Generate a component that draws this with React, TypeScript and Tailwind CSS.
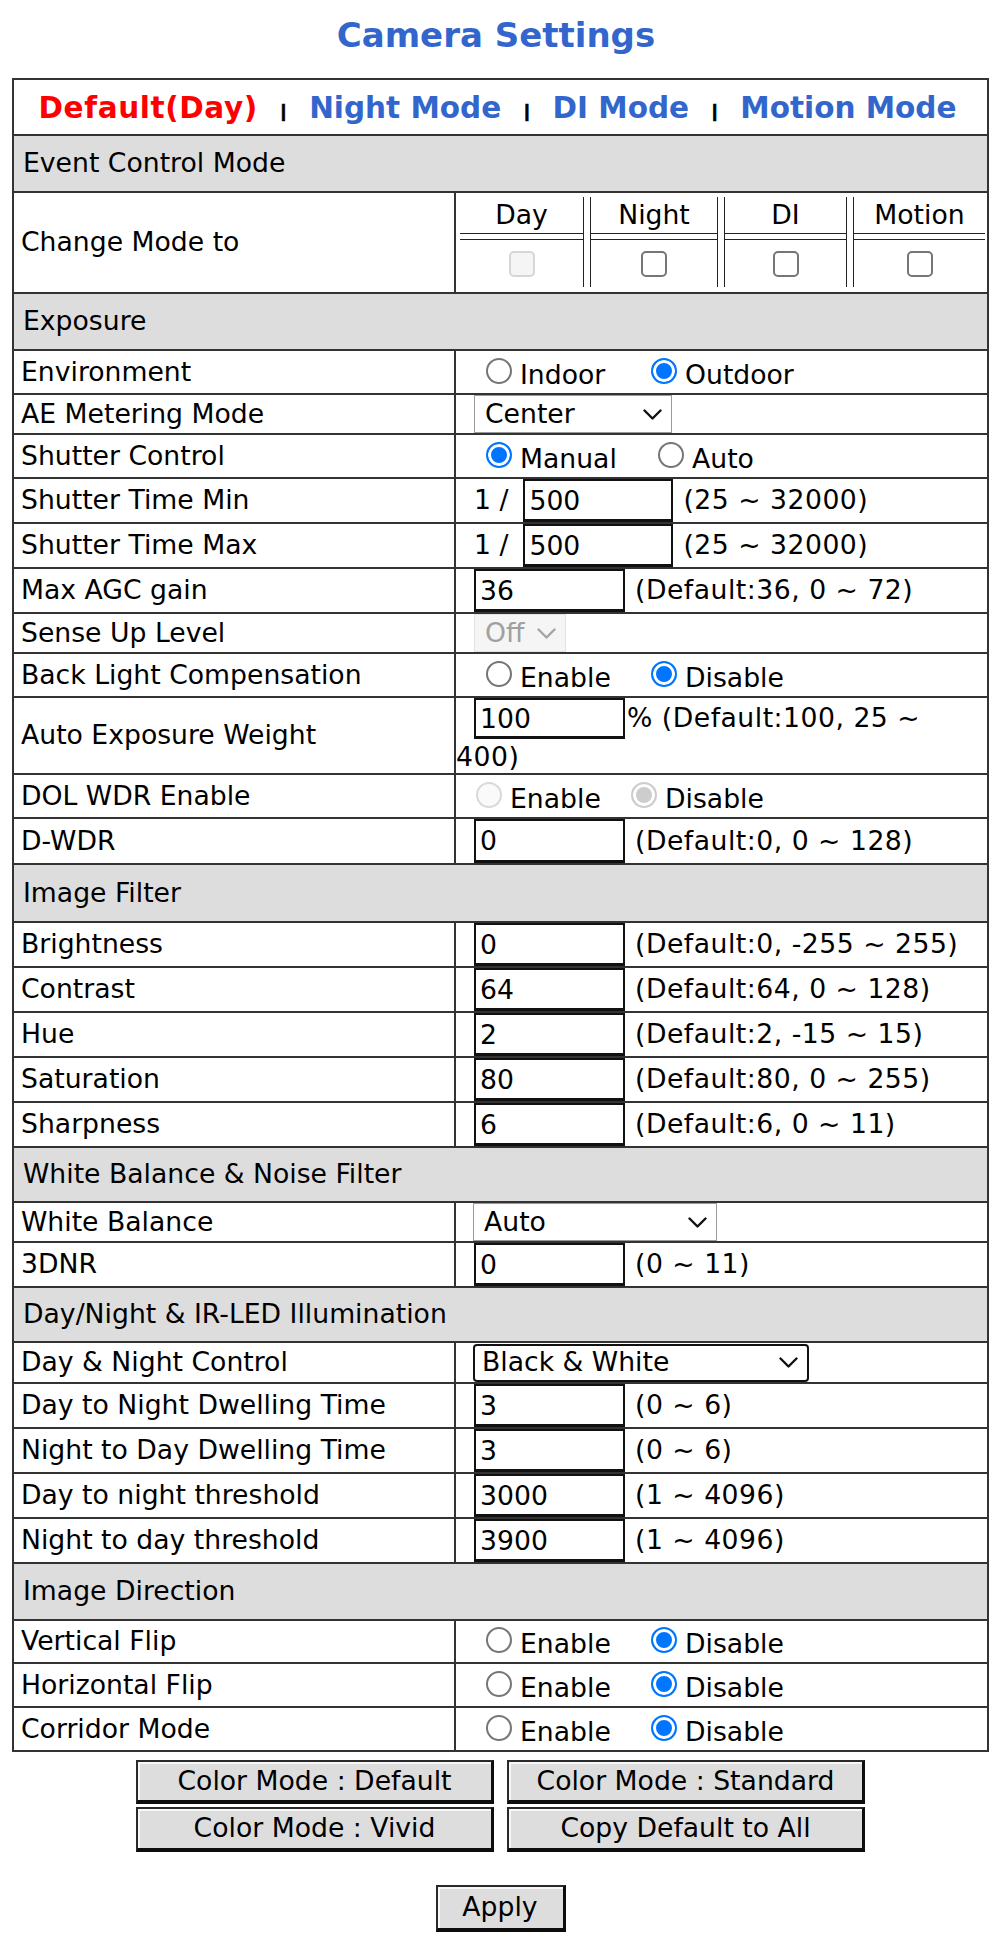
import React from 'react';

type RowProps = {
  label: string;
  h: string;
  right?: string;
  children?: React.ReactNode;
};

function Row({ label, h, right = 'items-center pl-[18px]', children }: RowProps) {
  return (
    <div className={`flex border-b-2 border-[#333] ${h}`}>
      <div className="flex w-[442px] shrink-0 items-center border-r-2 border-[#333] pl-[7px]">
        <span className="leading-none">{label}</span>
      </div>
      <div className={`flex min-w-0 flex-1 ${right}`}>{children}</div>
    </div>
  );
}

function Section({ title, h }: { title: string; h: string }) {
  return (
    <div className={`flex items-center border-b-2 border-[#333] bg-[#dddddd] pl-[9px] ${h}`}>
      <span className="leading-none">{title}</span>
    </div>
  );
}

function Radio({ checked, disabled }: { checked?: boolean; disabled?: boolean }) {
  let look = 'border-[#767676] bg-white';
  if (checked && !disabled) look = 'border-[#0075ff] bg-[#0075ff] shadow-[inset_0_0_0_3px_#ffffff]';
  if (!checked && disabled) look = 'border-[#d9d9d9] bg-[#fafafa]';
  if (checked && disabled) look = 'border-[#cdcdcd] bg-[#cdcdcd] shadow-[inset_0_0_0_3px_#ffffff]';
  return (
    <input
      type="radio"
      defaultChecked={checked}
      disabled={disabled}
      className={`mb-[3px] h-[26px] w-[26px] shrink-0 appearance-none rounded-full border-2 ${look}`}
    />
  );
}

function Check({ disabled }: { disabled?: boolean }) {
  return (
    <input
      type="checkbox"
      disabled={disabled}
      className={`h-[26px] w-[26px] appearance-none rounded-[5px] border-2 ${
        disabled ? 'border-[#d6d6d6] bg-[#f5f5f5]' : 'border-[#767676] bg-white'
      }`}
    />
  );
}

type RadioRowProps = {
  label: string;
  h: string;
  a: string;
  b: string;
  on: number;
  pad?: string;
  w?: string;
  disabled?: boolean;
};

function RadioRow({ label, h, a, b, on, pad = 'pl-[30px]', w = 'w-[131px]', disabled }: RadioRowProps) {
  return (
    <Row label={label} h={h} right={`items-center ${pad}`}>
      <Radio checked={on === 0} disabled={disabled} />
      <span className={`ml-[8px] shrink-0 pt-[6px] leading-none ${w}`}>{a}</span>
      <Radio checked={on === 1} disabled={disabled} />
      <span className="ml-[8px] pt-[6px] leading-none">{b}</span>
    </Row>
  );
}

function TextInput({ value, w = 'w-[151px]', h = 'h-[43px]' }: { value: string; w?: string; h?: string }) {
  return (
    <input
      type="text"
      defaultValue={value}
      className={`shrink-0 border-2 border-b-[3px] border-[#111] bg-white pl-[4px] leading-none outline-none ${w} ${h}`}
    />
  );
}

type InputRowProps = { label: string; value: string; hint: string; h?: string; ih?: string; prefix?: boolean };

function InputRow({ label, value, hint, h = 'h-[45px]', ih = 'h-[43px]', prefix }: InputRowProps) {
  return (
    <Row label={label} h={h}>
      {prefix && <span className="mr-[15px] leading-none">1 /</span>}
      <TextInput value={value} w={prefix ? 'w-[150px]' : 'w-[151px]'} h={ih} />
      <span className="ml-[10px] whitespace-nowrap leading-none tracking-[0.5px]">{hint}</span>
    </Row>
  );
}

function Chevron({ color }: { color: string }) {
  return (
    <svg width="19" height="11" viewBox="0 0 19 11" fill="none" className="shrink-0">
      <polyline points="1.5,1.5 9.5,9.5 17.5,1.5" stroke={color} strokeWidth="2.4" strokeLinecap="round" strokeLinejoin="round" />
    </svg>
  );
}

type SelectProps = { value: string; w: string; disabled?: boolean; focused?: boolean };

function Select({ value, w, disabled, focused }: SelectProps) {
  let look = 'border border-[#9a9a9a] bg-white pl-[10px]';
  if (disabled) look = 'border border-[#e2e2e2] bg-[#f5f5f5] pl-[10px] text-[#a0a0a0]';
  if (focused) look = 'rounded-[4px] border-2 border-[#111] bg-white pl-[7px]';
  return (
    <div className={`flex h-[38px] shrink-0 items-center justify-between pr-[9px] ${look} ${w}`}>
      <span className="leading-none">{value}</span>
      <Chevron color={disabled ? '#a3a3a3' : '#111'} />
    </div>
  );
}

function Btn({ children, cls }: { children: React.ReactNode; cls: string }) {
  return (
    <button
      type="button"
      className={`flex items-center justify-center border-2 border-b-[4px] border-r-[3px] border-[#2a2a2a] border-b-[#0d0d0d] border-r-[#0d0d0d] bg-[#dddddd] leading-none shadow-[inset_2px_2px_0_#f7f7f7] ${cls}`}
    >
      {children}
    </button>
  );
}

const modes = ['Day', 'Night', 'DI', 'Motion'];

function Bar() {
  return (
    <span className="relative -top-[1px] font-['Liberation_Sans',sans-serif] text-[19px] font-bold text-black [-webkit-text-stroke:0.7px_#000]">
      |
    </span>
  );
}

export default function App() {
  return (
    <div className="min-h-[1947px] w-[992px] bg-white font-['DejaVu_Sans',Verdana,sans-serif] text-[26.67px] text-black">
      <h1 className="pt-[18px] text-center text-[34px] font-bold leading-none text-[#3366cc]">Camera Settings</h1>

      <div className="ml-[12px] mt-[26px] w-[977px] border-x-2 border-t-2 border-[#333]">
        {/* mode tabs */}
        <div className="flex h-[56px] items-center justify-center border-b-2 border-[#333] pr-[6px] pt-[4px]">
          <div className="flex items-baseline gap-[23px] text-[29.5px] font-bold leading-none">
            <span className="tracking-[0.6px] text-[#ff0000]">Default(Day)</span>
            <Bar />
            <span className="text-[#3366cc]">Night Mode</span>
            <Bar />
            <span className="text-[#3366cc]">DI Mode</span>
            <Bar />
            <span className="text-[#3366cc]">Motion Mode</span>
          </div>
        </div>

        <Section title="Event Control Mode" h="h-[57px]" />
        <Row label="Change Mode to" h="h-[101px]" right="items-start pl-[4px] pt-[4px]">
          <div className="grid grid-cols-[124px_128px_123px_132px] gap-x-[6px]">
            {modes.map((m, i) => (
              <div
                key={m}
                className={`flex h-[90px] flex-col border-[#222] ${i > 0 ? 'border-l' : ''} ${i < 3 ? 'border-r' : ''}`}
              >
                <div className="flex h-[37px] items-center justify-center border-b border-[#222]">
                  <span className="leading-none">{m}</span>
                </div>
                <div className="h-[5px]" />
                <div className="flex flex-1 items-center justify-center border-t border-[#222]">
                  <Check disabled={i === 0} />
                </div>
              </div>
            ))}
          </div>
        </Row>

        <Section title="Exposure" h="h-[57px]" />
        <RadioRow label="Environment" h="h-[44px]" a="Indoor" b="Outdoor" on={1} />
        <Row label="AE Metering Mode" h="h-[40px]">
          <Select value="Center" w="w-[198px]" />
        </Row>
        <RadioRow label="Shutter Control" h="h-[44px]" a="Manual" b="Auto" on={0} w="w-[138px]" />
        <InputRow label="Shutter Time Min" value="500" hint="(25 ~ 32000)" prefix />
        <InputRow label="Shutter Time Max" value="500" hint="(25 ~ 32000)" prefix />
        <InputRow label="Max AGC gain" value="36" hint="(Default:36, 0 ~ 72)" />
        <Row label="Sense Up Level" h="h-[40px]">
          <Select value="Off" w="w-[92px]" disabled />
        </Row>
        <RadioRow label="Back Light Compensation" h="h-[44px]" a="Enable" b="Disable" on={1} />
        <Row label="Auto Exposure Weight" h="h-[77px]" right="flex-col">
          <div className="flex h-[41px] items-center pl-[18px]">
            <TextInput value="100" h="h-[41px]" />
            <span className="ml-[2px] whitespace-nowrap leading-none tracking-[0.5px]">% (Default:100, 25 ~</span>
          </div>
          <div className="flex h-[34px] items-center pt-[2px]">
            <span className="leading-none tracking-[0.5px]">400)</span>
          </div>
        </Row>
        <RadioRow
          label="DOL WDR Enable"
          h="h-[44px]"
          a="Enable"
          b="Disable"
          on={1}
          pad="pl-[20px]"
          w="w-[121px]"
          disabled
        />
        <InputRow label="D-WDR" value="0" hint="(Default:0, 0 ~ 128)" h="h-[46px]" ih="h-[44px]" />

        <Section title="Image Filter" h="h-[58px]" />
        <InputRow label="Brightness" value="0" hint="(Default:0, -255 ~ 255)" />
        <InputRow label="Contrast" value="64" hint="(Default:64, 0 ~ 128)" />
        <InputRow label="Hue" value="2" hint="(Default:2, -15 ~ 15)" />
        <InputRow label="Saturation" value="80" hint="(Default:80, 0 ~ 255)" />
        <InputRow label="Sharpness" value="6" hint="(Default:6, 0 ~ 11)" />

        <Section title="White Balance & Noise Filter" h="h-[55px]" />
        <Row label="White Balance" h="h-[40px]" right="items-center pl-[17px]">
          <Select value="Auto" w="w-[244px]" />
        </Row>
        <InputRow label="3DNR" value="0" hint="(0 ~ 11)" />

        <Section title="Day/Night & IR-LED Illumination" h="h-[55px]" />
        <Row label="Day & Night Control" h="h-[41px]" right="items-center pl-[17px]">
          <Select value="Black & White" w="w-[336px]" focused />
        </Row>
        <InputRow label="Day to Night Dwelling Time" value="3" hint="(0 ~ 6)" />
        <InputRow label="Night to Day Dwelling Time" value="3" hint="(0 ~ 6)" />
        <InputRow label="Day to night threshold" value="3000" hint="(1 ~ 4096)" />
        <InputRow label="Night to day threshold" value="3900" hint="(1 ~ 4096)" />

        <Section title="Image Direction" h="h-[57px]" />
        <RadioRow label="Vertical Flip" h="h-[43px]" a="Enable" b="Disable" on={1} />
        <RadioRow label="Horizontal Flip" h="h-[44px]" a="Enable" b="Disable" on={1} />
        <RadioRow label="Corridor Mode" h="h-[44px]" a="Enable" b="Disable" on={1} />
      </div>

      <div className="ml-[12px] mt-[8px] flex w-[977px] flex-col items-center">
        <div className="grid grid-cols-[358px_358px] gap-x-[13px] gap-y-[3px]">
          <Btn cls="h-[44px]">Color Mode : Default</Btn>
          <Btn cls="h-[44px]">Color Mode : Standard</Btn>
          <Btn cls="h-[45px]">Color Mode : Vivid</Btn>
          <Btn cls="h-[45px]">Copy Default to All</Btn>
        </div>
        <Btn cls="mt-[33px] h-[47px] w-[130px]">Apply</Btn>
      </div>
    </div>
  );
}
